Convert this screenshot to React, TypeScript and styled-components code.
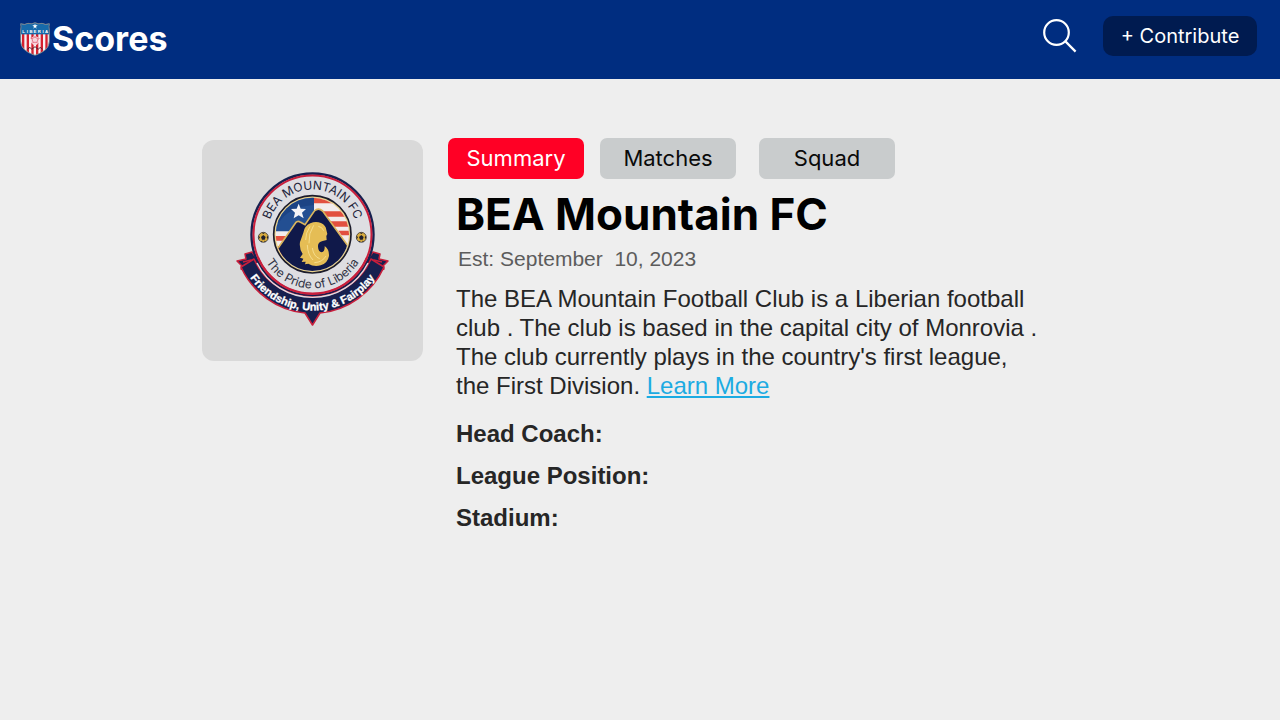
import React from "react";
import styled, { createGlobalStyle } from "styled-components";

const GlobalStyle = createGlobalStyle`
  *, *::before, *::after { box-sizing: border-box; }
  body {
    margin: 0;
    background: #eeeeee;
    color: #262626;
    font-family: "Liberation Sans", Arial, sans-serif;
  }
`;

const Header = styled.header`
  display: flex;
  align-items: center;
  justify-content: space-between;
  min-height: 79px;
  padding: 0 23px 0 20px;
  background: #002d80;
  color: #ffffff;
`;

const Brand = styled.a`
  display: flex;
  align-items: center;
  gap: 2px;
  padding-bottom: 2px;
  color: inherit;
  text-decoration: none;
  font: 700 34px/40px Inter, sans-serif;
`;

const Actions = styled.div`
  display: flex;
  align-items: center;
  gap: 26px;
  padding-bottom: 8px;
`;

const IconButton = styled.button`
  display: flex;
  padding: 0;
  border: 0;
  background: none;
  color: inherit;
  cursor: pointer;
`;

const ContributeButton = styled.button`
  width: 154px;
  height: 40px;
  padding: 0;
  border: 0;
  border-radius: 10px;
  background: #001b50;
  color: #ffffff;
  font: 400 20px/24px Inter, sans-serif;
  cursor: pointer;
`;

const Main = styled.main`
  display: flex;
  flex-wrap: wrap;
  align-items: flex-start;
  gap: 25px;
  max-width: 876px;
  margin: 0 auto;
  padding: 59px 0 40px;
`;

const CrestCard = styled.div`
  width: 221px;
  margin-top: 2px;
  border-radius: 12px;
  background: #d9d9d9;

  svg { display: block; width: 100%; }
`;

const Details = styled.div`
  flex: 1 1 400px;
`;

const Tabs = styled.nav`
  display: grid;
  grid-template-columns: 152px 159px 136px;
`;

const Tab = styled.button<{ $active?: boolean }>`
  width: 136px;
  height: 41px;
  padding: 0 0 2px;
  border: 0;
  border-radius: 7px;
  background: ${(p) => (p.$active ? "#ff0025" : "#c9cccd")};
  color: ${(p) => (p.$active ? "#ffffff" : "#0a0a0a")};
  font: 400 22px/28px Inter, sans-serif;
  cursor: pointer;
`;

const Info = styled.article`
  padding: 7px 0 0 8px;
`;

const Title = styled.h1`
  margin: 0;
  color: #000000;
  font: 700 44px/56px Inter, sans-serif;
`;

const Established = styled.p`
  margin: 5px 0 0;
  padding-left: 2px;
  color: #5c5c5c;
  font-size: 21px;
  line-height: 24px;
`;

const Summary = styled.p`
  max-width: 586px;
  margin: 13px 0 0;
  font-size: 24px;
  line-height: 29px;
`;

const MoreLink = styled.a`
  color: #1cabe2;
`;

const Facts = styled.dl`
  display: grid;
  gap: 14px;
  margin: 20px 0 0;
  font-size: 24px;
  line-height: 28px;
`;

const FactName = styled.dt`
  font-weight: 700;
`;

const shieldPath =
  "M2 5 Q14 10 24 4 Q36 8 45 2 Q55 8 66 4 Q77 10 88 5 Q86 14 88 24 V58 Q88 86 45 100 Q2 86 2 58 V24 Q4 14 2 5 Z";

function Shield() {
  return (
    <svg width="30" height="34" viewBox="0 0 90 102" aria-hidden="true">
      <clipPath id="shield"><path d={shieldPath} /></clipPath>
      <g clipPath="url(#shield)">
        <rect width="90" height="102" fill="#f7f1f3" />
        {[6, 20, 34, 48, 62, 76].map((x) => (
          <rect key={x} x={x} y="36" width="7" height="66" fill="#d5202f" />
        ))}
        <rect width="90" height="37" fill="#176aaa" />
        <circle cx="45" cy="56" r="13" fill="#f8d6dc" />
        <path d="M36 50l9-5 9 6-3 10H39z M45 45v-4 M54 51l5-2 M51 61l4 5 M39 61l-4 5 M36 50l-5-2" fill="none" stroke="#e0526a" strokeWidth="2" />
        <path d="M22 82l8-6 5 6 10-8 10 8 5-6 8 6" fill="none" stroke="#5d2730" strokeWidth="3" />
      </g>
      <path d="M45 5l2 5h6l-5 4 2 6-5-4-5 4 2-6-5-4h6z" fill="#fff" />
      <text x="11 22 33 45 58 69 80" y="33" textAnchor="middle" fill="#fff" fontFamily="Liberation Sans" fontWeight="700" fontSize="13">LIBERIA</text>
      <path d={shieldPath} fill="none" stroke="#78838c" strokeWidth="3" />
    </svg>
  );
}

function SearchIcon() {
  return (
    <svg width="34" height="34" viewBox="0 0 34 34" fill="none" stroke="currentColor" strokeWidth="2.2" aria-hidden="true">
      <circle cx="13.5" cy="13.5" r="12.3" />
      <path d="M22.4 22.4 32.6 32.6" />
    </svg>
  );
}

function MiniBall({ x }: { x: number }) {
  return (
    <g transform={`translate(${x} 232)`}>
      <circle r="15" fill="#d8ac3f" stroke="#20202c" strokeWidth="2" />
      <path d="M0-7 7-1 4 7H-4L-7-1z M-5-14 0-10 5-14z M14-5 10 0 14 6z M-14-5-10 0-14 6z M-8 12-3 10-4 15z M8 12 3 10 4 15z" fill="#20202c" />
    </g>
  );
}

function Crest() {
  return (
    <svg viewBox="202 140 221 221" role="img" aria-label="BEA Mountain FC crest">
      <defs>
        <path id="nameArc" d="M267.5 234.5A45 45 0 0 1 357.5 234.5" />
        <path id="mottoArc" d="M258.5 234.5A54 54 0 0 0 366.5 234.5" />
        <path id="bannerArc" d="M236.5 234.5A76 76 0 0 0 388.5 234.5" />
        <clipPath id="field"><circle cx="262" cy="223" r="110" /></clipPath>
      </defs>
      <g strokeLinejoin="round" strokeWidth="1.5">
        <path d="M237 261 246 259 245 254 252 252 264 269 251 273 241 269 242 266Z" fill="#17204f" stroke="#c81f3c" />
        <path d="M388 261 379 259 380 254 373 252 361 269 374 273 384 269 383 266Z" fill="#17204f" stroke="#c81f3c" />
        <path d="M243 262 251 260 258 270M382 262 374 260 367 270" fill="none" stroke="#c81f3c" />
      </g>
      <circle cx="312.5" cy="234.5" r="61" fill="#dedee2" stroke="#17204f" strokeWidth="2.4" />
      <circle cx="312.5" cy="234.5" r="59" fill="none" stroke="#c81f3c" strokeWidth="2" />
      <path
        d="M241 267A79 79 0 0 0 305 313L312.5 325 320 313A79 79 0 0 0 384 267L371 259A64 64 0 0 1 254 259Z"
        fill="#17204f"
        stroke="#c81f3c"
        strokeWidth="1.6"
        strokeLinejoin="round"
      />
      <path d="M257 263A62 62 0 0 0 368 263" fill="none" stroke="#dedee2" strokeWidth="1.4" />
      <path d="M258 257.500A59 59 0 0 0 367 257.500" fill="none" stroke="#c81f3c" strokeWidth="2" />
      <g transform="translate(225 160) scale(.33333)">
        <circle cx="262" cy="223" r="116" fill="#e9d28c" stroke="#1b1b2a" strokeWidth="5" />
        <g clipPath="url(#field)">
          <rect x="150" y="110" width="230" height="230" fill="#f2ecec" />
          <path d="M266 114H330L350 130H266Z M285 154H390V170H300Z M315 184H390V200H325Z M340 212H390V226H350Z" fill="#e2503f" />
          <path d="M150 110H267V180L220 214H150Z" fill="#234f92" />
          <path d="M150 110H267V135Q190 140 160 190H150Z" fill="#183d7c" opacity=".6" />
          <path d="M150 228H195L188 242H150Z M150 258H175V290H150Z" fill="#e2503f" />
          <path d="M145 285 212 188Q218 181 227 187L240 194 268 153Q280 142 293 153L382 276V345H145Z" fill="#10194a" stroke="#d9b45c" strokeWidth="5" />
        </g>
        <path d="M221 131 227 146 243 147 231 158 236 175 221 166 206 175 210 158 198 147 215 146Z" fill="#f5f5f8" />
        <path
          d="M256 190Q272 182 288 189Q303 196 304 210L307 222 304 228 305 240 293 243Q278 246 279 260Q280 275 290 277Q300 275 299 258Q313 268 312 288Q308 310 287 316Q266 321 250 311L240 313 242 305 230 306 235 296 225 293 233 282Q222 266 225 246Q229 235 235 218Q238 198 256 190Z"
          fill="#e5bd55"
        />
        <path d="M255 199Q241 220 242 240M266 196Q250 220 252 250M247 255Q248 284 264 300M262 264Q266 290 284 296M268 308Q292 307 303 288M280 199Q292 201 296 212" fill="none" stroke="#f5dc8c" strokeWidth="3" />
        <MiniBall x={115} />
        <MiniBall x={409} />
      </g>
      <g fontFamily="Liberation Sans" textAnchor="middle">
        <text fontSize="12" fill="#22243a" fontFamily="Inter"><textPath href="#nameArc" startOffset="50%">BEA MOUNTAIN FC</textPath></text>
        <text fontSize="12" fill="#303244" fontFamily="Inter"><textPath href="#mottoArc" startOffset="50%">The Pride of Liberia</textPath></text>
        <text fontSize="11" fontWeight="700" fill="#fff" stroke="#fff" strokeWidth=".3"><textPath href="#bannerArc" startOffset="50%">Friendship, Unity &amp; Fairplay</textPath></text>
      </g>
    </svg>
  );
}

export default function App() {
  return (
    <>
      <GlobalStyle />
      <Header>
        <Brand href="#">
          <Shield />
          Scores
        </Brand>
        <Actions>
          <IconButton type="button" aria-label="Search">
            <SearchIcon />
          </IconButton>
          <ContributeButton type="button">+ Contribute</ContributeButton>
        </Actions>
      </Header>
      <Main>
        <CrestCard>
          <Crest />
        </CrestCard>
        <Details>
          <Tabs>
            <Tab type="button" $active>Summary</Tab>
            <Tab type="button">Matches</Tab>
            <Tab type="button">Squad</Tab>
          </Tabs>
          <Info>
            <Title>BEA Mountain FC</Title>
            <Established>Est: September&nbsp; 10, 2023</Established>
            <Summary>
              The BEA Mountain Football Club is a Liberian football club . The
              club is based in the capital city of Monrovia . The club
              currently plays in the country's first league, the First
              Division. <MoreLink href="#">Learn More</MoreLink>
            </Summary>
            <Facts>
              <FactName>Head Coach:</FactName>
              <FactName>League Position:</FactName>
              <FactName>Stadium:</FactName>
            </Facts>
          </Info>
        </Details>
      </Main>
    </>
  );
}
